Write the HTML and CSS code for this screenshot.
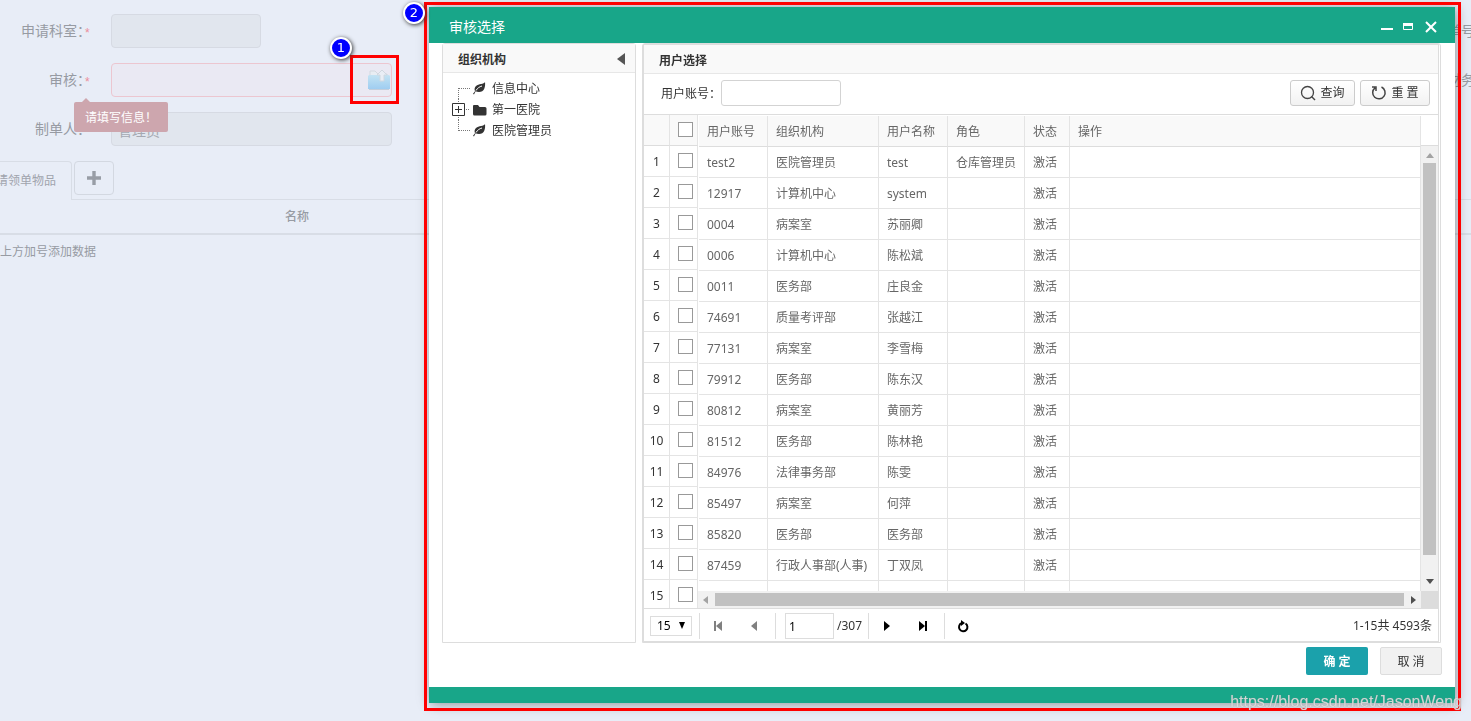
FILE: index.html
```html
<!DOCTYPE html>
<html lang="zh-CN">
<head>
<meta charset="utf-8">
<title>审核选择</title>
<link rel="stylesheet" href="styles.css">
</head>
<body>
<main class="page">
  <form class="form">
    <div class="field"><label for="dept">申请科室：</label><i>*</i><input class="short" id="dept" disabled><span class="side">单号</span></div>
    <div class="field"><label for="auditor">审核：</label><i>*</i>
      <div class="picker"><input class="error" id="auditor">
        <svg class="folder" width="24" height="22" viewBox="0 0 24 22"><defs><linearGradient id="fold" x2="0" y2="1"><stop stop-color="#c3e3f3"/><stop offset="1" stop-color="#9fcdf1"/></linearGradient></defs><path d="M3 7V2h5l3 3h9l1 3" fill="#e8edf3" stroke="#d3d9e0"/><path d="M2 6h20l1 1v13H1V7z" fill="url(#fold)"/><path d="M2 20.500h20" stroke="#c3cedb"/><path d="M15 1l5 5h-3v6h-4V6h-3z" fill="#e9eef5" stroke="#d0d8e0"/></svg>
      </div><span class="side">财务</span>
      <div class="tip">请填写信息！</div>
    </div>
    <div class="field"><label for="maker">制单人：</label><i></i><input class="long" id="maker" value="管理员" disabled></div>
  </form>
  <div class="tabs"><a class="tab" href="#items">请领单物品</a><button class="add" type="button" aria-label="添加"><svg width="14" height="14"><path d="M7 0v14M0 7h14" stroke="#989da6" stroke-width="3.4"/></svg></button></div>
  <div class="list-head"><span>名称</span></div>
  <div class="empty">上方加号添加数据</div>
</main>

<section class="dialog" role="dialog" aria-label="审核选择">
  <header class="dialog-head">
    <h1>审核选择</h1>
    <div class="win-tools">
      <button type="button" aria-label="最小化"><svg width="12" height="14"><path d="M0 9h12" stroke="#fff" stroke-width="2"/></svg></button>
      <button type="button" aria-label="最大化"><svg width="10" height="14"><path d="M.5 4v5.500h9V4" fill="none" stroke="#fff"/><path d="M0 4.500h10" stroke="#fff" stroke-width="3"/></svg></button>
      <button type="button" aria-label="关闭"><svg width="12" height="14"><path d="M1 2l10 10M11 2L1 12" stroke="#fff" stroke-width="2"/></svg></button>
    </div>
  </header>
  <div class="dialog-body">
    <aside class="panel org">
      <div class="panel-title"><h2>组织机构</h2><button class="fold" type="button" aria-label="折叠"><svg width="8" height="14"><path d="M8 0v12L0 6z" fill="#555"/></svg></button></div>
      <ul class="tree">
        <li><svg width="18" height="21"><path d="M6.500 10v11M7 10.500h11" fill="none" stroke="#777" stroke-dasharray="1 1"/></svg><svg class="node" width="14" height="14" viewBox="0 0 14 14"><path d="M12 0c.6 5-.8 10-6 10-1.500 0-2.600-.3-3.400-.8L1 12.500l-1-.8 2-2.500C.3 4.500 4.500 2.500 8 2 10 1.700 11.500 1 12 0z" fill="#333"/><path d="M3 8.500c1.500-2.500 3.500-3.800 6-4.500" fill="none" stroke="#fff"/></svg><span>信息中心</span></li>
        <li><svg width="18" height="21"><path d="M6.500 0v21M14 10.500h4" stroke="#777" stroke-dasharray="1 1"/><path d="M.5 4.500h12v12H.5z" fill="#fff" stroke="#333"/><path d="M3 10.500h7M6.500 7v7" stroke="#333"/></svg><svg class="node" width="14" height="14"><path d="M0 3q0-1 1-1h4l1.500 2H12q1.500 0 1.500 1.500V11q0 1.500-1.500 1.500H1.500Q0 12.500 0 11z" fill="#333"/></svg><span>第一医院</span></li>
        <li><svg width="18" height="21"><path d="M6.500 0v11M7 10.500h11" fill="none" stroke="#777" stroke-dasharray="1 1"/></svg><svg class="node" width="14" height="14" viewBox="0 0 14 14"><path d="M12 0c.6 5-.8 10-6 10-1.500 0-2.600-.3-3.400-.8L1 12.500l-1-.8 2-2.500C.3 4.500 4.500 2.500 8 2 10 1.700 11.500 1 12 0z" fill="#333"/><path d="M3 8.500c1.500-2.500 3.500-3.800 6-4.500" fill="none" stroke="#fff"/></svg><span>医院管理员</span></li>
      </ul>
    </aside>
    <section class="panel users">
      <div class="users-inner">
      <div class="panel-title"><h2>用户选择</h2></div>
      <form class="search">
        <label for="account">用户账号：</label><input id="account">
        <div class="search-actions">
          <button class="btn" type="button"><svg width="16" height="16"><circle cx="7.500" cy="7.500" r="6" fill="none" stroke="#444" stroke-width="1.300"/><path d="M11.500 11.500l3.500 3.500" stroke="#444" stroke-width="1.400"/></svg>查询</button>
          <button class="btn reset" type="button"><svg width="16" height="16"><path d="M10.500 2A6.200 6.200 0 1 1 4 2.800M1 2h4v4" fill="none" stroke="#444" stroke-width="1.500"/></svg>重 置</button>
        </div>
      </form>
      <div class="grid">
        <table class="frozen">
          <thead><tr><th class="num"></th><th><input type="checkbox" aria-label="全选"></th></tr></thead>
          <tbody id="frozen-rows"></tbody>
        </table>
        <div class="data">
          <div class="data-view">
            <table class="rows">
              <colgroup><col class="c-account"><col class="c-org"><col class="c-name"><col class="c-role"><col class="c-state"><col></colgroup>
              <thead><tr><th>用户账号</th><th>组织机构</th><th>用户名称</th><th>角色</th><th>状态</th><th>操作</th></tr></thead>
              <tbody id="data-rows"></tbody>
            </table>
          </div>
          <div class="hbar"><svg width="5" height="8"><path d="M5 0v8L0 4z" fill="#a3a3a3"/></svg><span class="thumb"></span><svg width="5" height="8"><path d="M0 0v8l5-4z" fill="#505050"/></svg></div>
        </div>
        <div class="scroll-side">
          <div class="vbar"><svg width="8" height="5"><path d="M0 5h8L4 0z" fill="#a3a3a3"/></svg><span class="thumb"></span><svg width="8" height="5"><path d="M0 0h8L4 5z" fill="#505050"/></svg></div>
          <div class="corner"></div>
        </div>
      </div>
      <div class="pager">
        <span class="size"><select aria-label="每页条数"><option>15</option></select><svg width="6" height="7"><path d="M0 0h6L3 7z" fill="#000"/></svg></span>
        <span class="nav split"><button type="button" aria-label="首页"><svg width="8" height="10"><path d="M1 0v10" stroke="#808080" stroke-width="2"/><path d="M8 0v10L2 5z" fill="#808080"/></svg></button><button type="button" aria-label="上一页"><svg width="8" height="10"><path d="M7 0v10L1 5z" fill="#808080"/></svg></button></span>
        <span class="jump split"><input aria-label="页码" value="1"><span>/307</span></span>
        <span class="nav split"><button type="button" aria-label="下一页"><svg width="8" height="10"><path d="M1 0v10l6-5z"/></svg></button><button type="button" aria-label="末页"><svg width="8" height="10"><path d="M7 0v10" stroke="#000" stroke-width="2"/><path d="M0 0v10l6-5z"/></svg></button></span>
        <span class="nav split"><button type="button" aria-label="刷新"><svg width="12" height="13"><path d="M8.500 3.500A4.200 4.200 0 1 1 4.500 3.200" fill="none" stroke="#000" stroke-width="2"/><path d="M4 0l4 3-4 3z"/></svg></button></span>
        <span class="total">1-15共 4593条</span>
      </div>
      </div>
    </section>
  </div>
  <div class="dialog-actions"><button class="ok" type="button">确 定</button><button class="cancel" type="button">取 消</button></div>
  <footer class="dialog-foot"></footer>
</section>

<div class="mark mark-folder"></div>
<div class="mark mark-dialog"></div>
<span class="pin pin-one">1</span>
<span class="pin pin-two">2</span>
<div class="watermark">https://blog.csdn.net/JasonWeng</div>
<script src="rows.js"></script>
</body>
</html>
```
FILE: rows.js
```js
const users = [
  ["test2", "医院管理员", "test", "仓库管理员"],
  ["12917", "计算机中心", "system", ""],
  ["0004", "病案室", "苏丽卿", ""],
  ["0006", "计算机中心", "陈松斌", ""],
  ["0011", "医务部", "庄良金", ""],
  ["74691", "质量考评部", "张越江", ""],
  ["77131", "病案室", "李雪梅", ""],
  ["79912", "医务部", "陈东汉", ""],
  ["80812", "病案室", "黄丽芳", ""],
  ["81512", "医务部", "陈林艳", ""],
  ["84976", "法律事务部", "陈雯", ""],
  ["85497", "病案室", "何萍", ""],
  ["85820", "医务部", "医务部", ""],
  ["87459", "行政人事部(人事)", "丁双凤", ""],
  null
];
document.getElementById("frozen-rows").innerHTML = users.map((u, i) =>
  `<tr><td class="num">${i + 1}</td><td><input type="checkbox" aria-label="选择第${i + 1}行"></td></tr>`).join("");
document.getElementById("data-rows").innerHTML = users.map(u =>
  "<tr>" + (u ? [...u, "激活", ""] : ["", "", "", "", "", ""]).map(v => `<td>${v}</td>`).join("") + "</tr>").join("");
```
FILE: styles.css
```css
* { box-sizing: border-box; }
html, body { height: 100%; }
body {
  margin: 0;
  overflow: hidden;
  background: #e8edf7;
  color: #333;
  font: 12px/18px "Noto Sans", "Noto Sans CJK SC", sans-serif;
}
button, input, select { font: inherit; color: inherit; margin: 0; }
button { padding: 0; border: 0; background: none; }
svg { display: block; flex: none; }
h1, h2, ul { margin: 0; padding: 0; list-style: none; }

/* form behind the dialog */
.page { color: #979ba3; overflow: hidden; }
.form { display: flex; flex-direction: column; gap: 15px; padding-top: 14px; }
.field { display: flex; align-items: center; position: relative; height: 34px; font-size: 14px; }
.field label { display: flex; justify-content: flex-end; width: 91px; white-space: nowrap; }
.field i { width: 8px; margin: 4px 18px 0 -6px; font: 12px/18px "Liberation Sans", sans-serif; color: #ec8d9b; }
.field input { height: 34px; padding: 2px 6px 0; border: 1px solid #d6dae3; border-radius: 4px; background: #e1e6ee; color: #a5a9b2; }
.field .short { width: 150px; }
.field .long { width: 281px; }
.picker { position: relative; }
.field .error { width: 281px; border-color: #ecc6d0; background: #eae9f3; }
.folder { position: absolute; right: 1px; top: 6px; }
.side { position: absolute; left: calc(100% - 24px); white-space: nowrap; }
.tip { position: absolute; left: 74px; top: 39px; z-index: 1; padding: 7px 11px; width: 94px; height: 30px; border-radius: 2px; background: #cda6ae; color: #fff; font-size: 12px; white-space: nowrap; }
.tip::before { content: ""; position: absolute; left: 8px; top: -4px; border: 4px solid transparent; border-top: 0; border-bottom-color: #cda6ae; }
.tabs { display: flex; align-items: flex-start; gap: 2px; margin-top: 15px; border-bottom: 1px solid #d8dde6; }
.tab { display: flex; justify-content: flex-end; width: 72px; height: 39px; margin-bottom: -1px; padding: 10px 15px 0 0; border: 1px solid #d8dde6; border-width: 1px 1px 0 0; border-radius: 0 4px 0 0; background: #e8edf7; color: #a0a4ad; text-decoration: none; white-space: nowrap; }
.add { display: grid; place-items: center; width: 40px; height: 34px; border: 1px solid #d3d8e1; border-radius: 4px; }
.list-head { height: 35px; padding: 8px 0 0 285px; border-bottom: 2px solid #d8dde6; font-weight: 500; }
.empty { padding: 8px 0; }

/* dialog */
.dialog { position: fixed; inset: 7px 16px 18px 429px; display: flex; flex-direction: column; background: #fff; box-shadow: 1px 1px 12px rgba(0, 0, 0, .4); }
.dialog-head { display: flex; justify-content: space-between; align-items: center; height: 36px; padding: 4px 18px 0 20px; background: #18a689; color: #fff; }
.dialog-head h1 { font-size: 14px; font-weight: 400; }
.win-tools { display: flex; gap: 10px; }
.win-tools button:last-child { margin-left: 2px; }
.dialog-body { display: flex; flex: 1; min-height: 0; gap: 6px; padding: 0 14px 0 13px; }
.panel { border: 1px solid #ddd; border-radius: 3px 3px 0 0; }
.org { width: 194px; }
.panel-title { display: flex; align-items: center; justify-content: space-between; height: 29px; padding: 3px 10px 0 15px; border-bottom: 1px solid #e7e7e7; background: #f9f9f9; }
.panel-title h2 { font-size: 12px; font-weight: 700; }
.tree { padding: 5px 9px; }
.tree li { display: flex; align-items: center; height: 21px; }
.node { margin: 0 5px 0 3px; }
.users { flex: 1; min-width: 0; padding-right: 1px; }
.users-inner { height: 100%; display: flex; flex-direction: column; border: 1px solid #ddd; }
.users .panel-title { flex: none; }
.search { display: flex; flex: none; align-items: center; height: 41px; padding: 0 8px 2px 17px; border-bottom: 1px solid #ddd; }
.search label { width: 60px; padding-top: 2px; white-space: nowrap; }
.search input { width: 120px; height: 26px; border: 1px solid #d3d3d3; border-radius: 3px; }
.search-actions { display: flex; gap: 5px; margin-left: auto; }
.btn { display: flex; align-items: center; justify-content: center; gap: 4px; width: 65px; height: 26px; border: 1px solid #ccc; border-radius: 3px; background: linear-gradient(#fff, #f2f2f2); white-space: nowrap; }
.reset { width: 70px; }

/* user grid */
.grid { display: flex; flex: 1; min-height: 0; overflow: hidden; border-bottom: 1px solid #ddd; }
table { border-collapse: separate; border-spacing: 0; table-layout: fixed; }
th, td { height: 31px; padding: 2px 0 0 8px; border: 1px solid #e4e4e4; border-width: 0 1px 1px 0; text-align: left; font-weight: 400; white-space: nowrap; }
th { background: #f9f9f9; border-bottom-color: #ddd; }
.frozen { width: 54px; flex: none; align-self: flex-start; }
.frozen .num { width: 26px; padding: 2px 0 0; text-align: center; }
.frozen input { appearance: none; display: block; width: 15px; height: 15px; margin: 0 0 3px; border: 1px solid #999; background: #fff; }
.data { display: flex; flex: 1; min-width: 0; flex-direction: column; }
.data-view { flex: 1; min-height: 0; overflow: hidden; padding: 1px 0 0 1px; color: #666; }
.rows { width: 100%; }
.c-account, .c-name { width: 69px; }
.c-org { width: 111px; }
.c-role { width: 77px; }
.c-state { width: 45px; }
.hbar { display: flex; flex: none; align-items: center; gap: 7px; height: 17px; padding: 0 5px; background: #f1f1f1; }
.hbar .thumb { flex: 1; height: 13px; background: #c1c1c1; }
.scroll-side { display: flex; flex: none; flex-direction: column; width: 17px; padding-top: 30px; }
.vbar { display: flex; flex: 1; flex-direction: column; align-items: center; padding: 7px 0; border-top: 1px solid #ddd; background: #f1f1f1; }
.vbar .thumb { width: 13px; margin: 5px 0 24px; flex: 1; background: #c1c1c1; }
.corner { height: 17px; background: #dcdcdc; }
.pager { display: flex; flex: none; align-items: center; height: 32px; padding: 2px 6px 0; }
.size { position: relative; margin-right: 7px; }
.size select { appearance: none; display: block; width: 42px; height: 20px; padding: 0 6px; border: 1px solid #ddd; border-radius: 0; background: #fff; color: #000; line-height: 18px; }
.size svg { position: absolute; right: 7px; top: 6px; }
.split { display: flex; align-items: center; height: 26px; border-left: 1px solid #ddd; }
.nav { gap: 28px; padding: 0 17px 0 14px; }
.jump { padding: 0 6px 0 9px; gap: 3px; }
.jump input { width: 49px; height: 26px; padding: 0 3px; border: 1px solid #ddd; color: #000; }
.nav:nth-of-type(5) { padding-left: 12px; }
.total { margin-left: auto; }
.dialog-actions { display: flex; flex: none; justify-content: flex-end; gap: 12px; padding: 4px 13px 12px; }
.dialog-actions button { width: 62px; height: 28px; padding-top: 2px; border-radius: 2px; }
.ok { background: #1ba1ab; color: #fff; font-weight: 700; }
.cancel { border: 1px solid #ddd; background: #f1f1f1; }
.dialog-foot { height: 16px; background: #18a689; }

/* annotations */
.mark { position: fixed; border: 3px solid #f00; pointer-events: none; }
.mark-folder { left: 350px; top: 55px; width: 49px; height: 49px; }
.mark-dialog { inset: 2px 10px 10px 424px; }
.pin { position: fixed; display: grid; place-items: center; width: 22px; height: 22px; border: 2px solid #fff; border-radius: 50%; background: #00f; color: #fff; font: 13px/18px "DejaVu Sans", sans-serif; box-shadow: 1px 1px 4px #333; }
.pin-one { left: 330px; top: 37px; }
.pin-two { left: 403px; top: 2px; }
.watermark { position: fixed; right: 9px; bottom: 9px; color: rgba(255, 255, 255, .65); font: 16px/20px "Liberation Sans", Arial, sans-serif; text-shadow: 0 0 1px #888; }
```
